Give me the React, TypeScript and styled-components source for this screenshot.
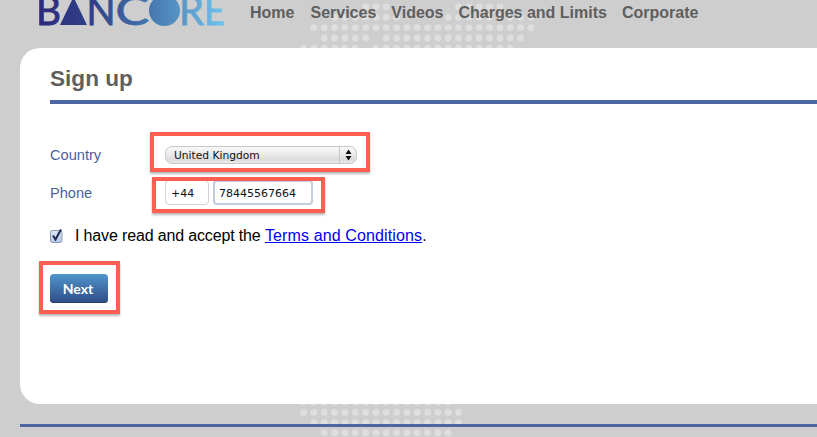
import React from "react"
import styled, {createGlobalStyle} from "styled-components"

const GlobalStyle = createGlobalStyle`
    html, body {
        margin: 0;
        padding: 0;
        background: #cecece;
    }
`

const Page = styled.div`
    position: relative;
    width: 817px;
    height: 437px;
    overflow: hidden;
    padding-left: 20px;
    box-sizing: border-box;
    background: #cecece;
    font-family: "Liberation Sans", Arial, sans-serif;
`

const DotLayer = styled.svg`
    position: absolute;
    left: 0;
    top: 0;
`

const Header = styled.header`
    position: relative;
    display: flex;
    height: 48px;
    padding-left: 19px;
`

const LogoMark = styled.svg`
    flex: none;
    display: block;
`

const Nav = styled.nav`
    display: flex;
    gap: 15px;
    margin-left: 26px;
    height: 25px;
    align-items: center;
`

const NavItem = styled.a`
    font-size: 16px;
    font-weight: bold;
    color: #5f5f5f;
    white-space: nowrap;

    &:first-child {
        margin-right: 1px;
    }
`

const Card = styled.main`
    position: relative;
    height: 356px;
    padding: 18px 0 0 30px;
    box-sizing: border-box;
    background: #fff;
    border-radius: 20px 0 0 20px;
`

const Title = styled.h1`
    margin: 0;
    padding-bottom: 8px;
    font-size: 22.6px;
    line-height: 26px;
    font-weight: bold;
    color: #5f5f5f;
    border-bottom: 4px solid #4d66a3;
`

const Form = styled.form`
    display: flex;
    flex-direction: column;
    margin-top: 42px;
`

const Row = styled.div<{ readonly $height: number, readonly $gap: number }>`
    display: flex;
    align-items: center;
    height: ${({$height}) => $height}px;
    margin-bottom: ${({$gap}) => $gap}px;
`

const Label = styled.label`
    width: 115px;
    flex: none;
    font-size: 14.6px;
    color: #4a5f9e;
`

const SelectBox = styled.div`
    position: relative;
    width: 192px;
    height: 18px;
`

const Select = styled.select`
    appearance: none;
    display: block;
    width: 100%;
    height: 100%;
    margin: 0;
    padding: 0 0 0 8px;
    box-sizing: border-box;
    border: 1px solid #c8c8c8;
    border-radius: 7px;
    background: linear-gradient(#f8f8f8, #ebebeb 45%, #dcdcdc 80%, #ececec);
    font-family: "DejaVu Sans", Verdana, sans-serif;
    font-size: 10.7px;
    color: #111;
`

const SelectArrows = styled.svg`
    position: absolute;
    right: 0;
    top: 1px;
    width: 17px;
    height: 16px;
    border-left: 1px solid #c8c8c8;
`

const PhoneGroup = styled.div`
    display: flex;
    gap: 4px;
`

const Input = styled.input<{ readonly $width: number, readonly $focused?: boolean }>`
    display: block;
    width: ${({$width}) => $width}px;
    height: 25px;
    margin: 0;
    padding: 1px ${({$focused}) => $focused ? 4 : 5}px 0;
    box-sizing: border-box;
    border: ${({$focused}) => $focused ? "2px solid #c3cde2" : "1px solid #d4d4d4"};
    border-radius: 4px;
    outline: none;
    background: #fff;
    font-family: "DejaVu Sans", Verdana, sans-serif;
    font-size: 11px;
    color: #111;
`

const CheckLabel = styled.label`
    display: flex;
    align-items: center;
    gap: 12px;
    font-size: 16px;
    letter-spacing: -0.15px;
    color: #000;
`

const CheckMark = styled.svg`
    flex: none;
    display: block;
`

const TermsLink = styled.a`
    color: #0000ee;
    letter-spacing: 0.13px;
    text-decoration: underline;
`

const NextButton = styled.button`
    display: block;
    width: 58px;
    height: 29px;
    padding: 0 2px 0 0;
    border: none;
    border-radius: 4px;
    background: linear-gradient(#4f95cb, #2f4c87);
    box-shadow: inset 0 -1px 0 #27406f;
    color: #fff;
    font-family: Lato, "Liberation Sans", sans-serif;
    font-size: 14px;
    font-weight: bold;
`

const Annotation = styled.div<{ readonly $x: number, readonly $y: number, readonly $w: number, readonly $h: number }>`
    position: absolute;
    left: ${({$x}) => $x}px;
    top: ${({$y}) => $y}px;
    width: ${({$w}) => $w}px;
    height: ${({$h}) => $h}px;
    box-sizing: border-box;
    border: 4px solid #ff5f50;
    box-shadow: 0 2px 2px rgba(0, 0, 0, 0.28);
    pointer-events: none;
`

const FooterRule = styled.div`
    position: relative;
    height: 3px;
    margin-top: 20px;
    background: #4d66a3;
`

// [y, first column, last column] of every run of dots, on a 10.33px grid from x=303.6
const dotRuns: ReadonlyArray<readonly [number, number, number]> = [
    [7, 6, 8], [7, 15, 19],
    [17.3, 3, 9], [17.3, 14, 22],
    [27.6, 1, 22],
    [38, 2, 6], [38, 8, 21],
    [48.2, 0, 5], [48.2, 7, 20],
    [402, 0, 14],
    [412.4, 0, 15],
    [422.6, 1, 15],
    [432.8, 2, 14],
]

const Dots = () => <DotLayer width={817} height={437}>
    {dotRuns.flatMap(([y, from, to]) =>
        Array.from({length: to - from + 1}, (_, i) =>
            <circle key={`${y}-${from + i}`} cx={303.6 + (from + i) * 10.33} cy={y} r={3.4} fill="#dedede"/>))}
</DotLayer>

const logoFont = {fontFamily: "Lato, sans-serif", fontSize: 41}

// letter, x, advance width: forced so each letter lands where the logo has it
const logoLetters: ReadonlyArray<readonly [string, number, number]> = [
    ["B", -3, 25],
    ["N", 47.5, 29],
    ["C", 76.5, 33.5],
    ["R", 140, 25],
    ["E", 165, 21],
]

const Logo = () => <LogoMark width={185} height={27} viewBox="0 0 185 27">
    <defs>
        <linearGradient id="logoFill" gradientUnits="userSpaceOnUse" x1="0" y1="0" x2="185" y2="0">
            <stop offset="0" stopColor="#2c2a7c"/>
            <stop offset="0.3" stopColor="#2f4288"/>
            <stop offset="0.6" stopColor="#4678b0"/>
            <stop offset="0.78" stopColor="#5a98c8"/>
            <stop offset="1" stopColor="#6ec4f0"/>
        </linearGradient>
    </defs>
    <g fill="url(#logoFill)" stroke="url(#logoFill)" strokeWidth="0.9" style={logoFont}>
        {logoLetters.map(([letter, x, width]) =>
            <text key={letter} x={x} y="25" textLength={width} lengthAdjust="spacingAndGlyphs">{letter}</text>)}
    </g>
    <g fill="url(#logoFill)">
        <polygon points="21,25 34.5,-3 48,25"/>
        <circle cx="125.5" cy="10.5" r="15.5"/>
    </g>
</LogoMark>

export default function App() {
    return <Page>
        <GlobalStyle/>
        <Dots/>
        <Header>
            <Logo/>
            <Nav>
                {["Home", "Services", "Videos", "Charges and Limits", "Corporate"].map(item =>
                    <NavItem key={item}>{item}</NavItem>)}
            </Nav>
        </Header>
        <Card>
            <Title>Sign up</Title>
            <Form>
                <Row $height={18} $gap={16}>
                    <Label>Country</Label>
                    <SelectBox>
                        <Select defaultValue="United Kingdom">
                            <option>United Kingdom</option>
                        </Select>
                        <SelectArrows viewBox="0 0 17 16">
                            <path d="M8.5 2.5 L11.5 7 H5.5 Z M8.5 13.5 L11.5 9 H5.5 Z" fill="#111"/>
                        </SelectArrows>
                    </SelectBox>
                </Row>
                <Row $height={25} $gap={19}>
                    <Label>Phone</Label>
                    <PhoneGroup>
                        <Input $width={44} defaultValue="+44"/>
                        <Input $width={100} $focused defaultValue="78445567664"/>
                    </PhoneGroup>
                </Row>
                <Row $height={24} $gap={26}>
                    <CheckLabel>
                        <CheckMark width={13} height={14} viewBox="0 0 13 14">
                            <defs>
                                <linearGradient id="checkFill" x1="0" y1="0" x2="0" y2="1">
                                    <stop offset="0" stopColor="#dfe7f5"/>
                                    <stop offset="1" stopColor="#b4c6e6"/>
                                </linearGradient>
                            </defs>
                            <rect x="0.5" y="1.5" width="11.5" height="12" rx="2" fill="url(#checkFill)" stroke="#8d9bb8"/>
                            <path d="M3 6.5 L5.5 10.5 L11 0.5" fill="none" stroke="#1c2b55" strokeWidth="2"/>
                        </CheckMark>
                        <span>I have read and accept the <TermsLink href="#">Terms and Conditions</TermsLink>.</span>
                    </CheckLabel>
                </Row>
                <NextButton type="button">Next</NextButton>
            </Form>
        </Card>
        <FooterRule/>
        <Annotation $x={150} $y={132} $w={220} $h={40}/>
        <Annotation $x={152} $y={177} $w={173} $h={36}/>
        <Annotation $x={39} $y={261} $w={81} $h={53}/>
    </Page>
}
